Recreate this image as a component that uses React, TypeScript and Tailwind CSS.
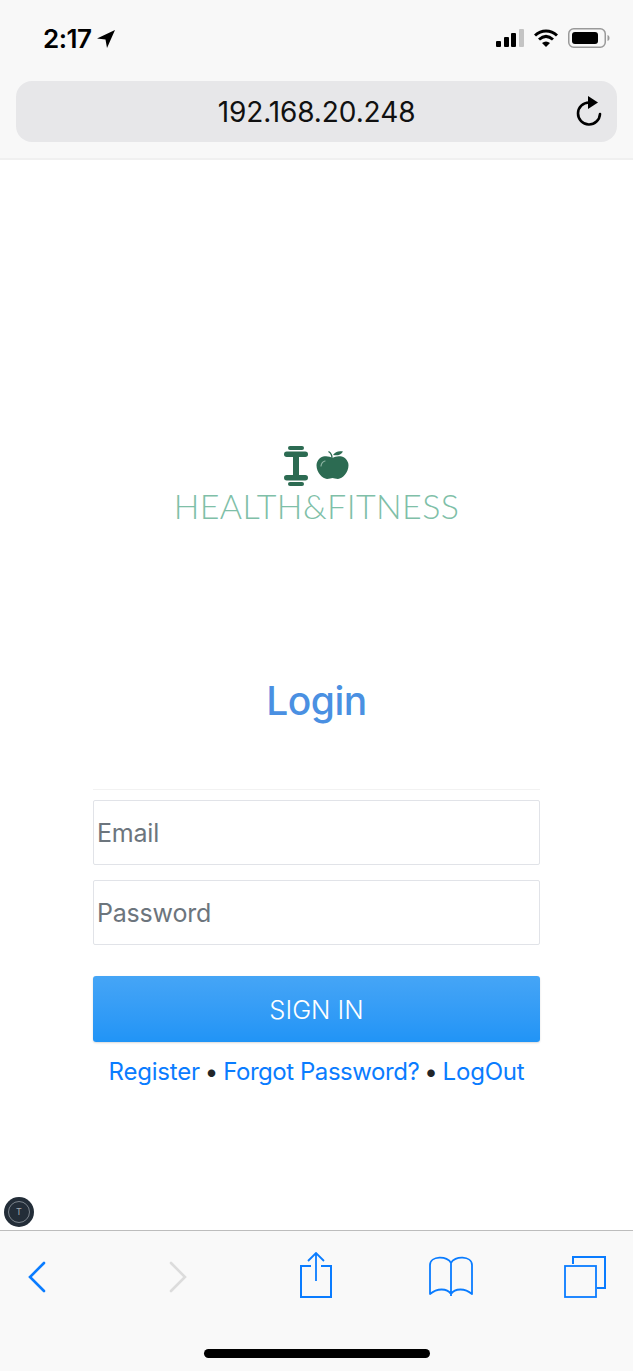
import React from "react";

const sans = "font-['Inter','Liberation_Sans',sans-serif]";

function StatusIcons() {
  return (
    <div className="flex items-center gap-[10px]">
      <svg width="28" height="18" viewBox="0 0 28 18">
        <rect x="0" y="12" width="5" height="6" rx="1" fill="#000" />
        <rect x="8" y="8" width="5" height="10" rx="1" fill="#000" />
        <rect x="15" y="4" width="5" height="14" rx="1" fill="#000" />
        <rect x="23" y="0" width="5" height="18" rx="1" fill="#c4c4c4" />
      </svg>
      <svg width="24" height="18" viewBox="0 0 24 18">
        <path d="M1 6.5C7.5 0.5 16.5 0.5 23 6.5" fill="none" stroke="#000" strokeWidth="3" />
        <path d="M5 10.5C9.5 6.5 14.5 6.5 19 10.5" fill="none" stroke="#000" strokeWidth="3" />
        <path d="M12 18L8 14C10.5 12 13.5 12 16 14Z" fill="#000" />
      </svg>
      <svg width="42" height="20" viewBox="0 0 42 20">
        <rect x="0.75" y="0.75" width="36.5" height="18.5" rx="5" fill="none" stroke="#9a9a9a" strokeWidth="1.5" />
        <rect x="4" y="4" width="26" height="12" rx="3" fill="#000" />
        <path d="M39.5 7C41 7.5 41.5 8.5 41.5 10C41.5 11.5 41 12.5 39.5 13Z" fill="#9a9a9a" />
      </svg>
    </div>
  );
}

function BrowserHeader() {
  return (
    <header className="h-[160px] shrink-0 border-b-2 border-[#f0f0f0] bg-[#f8f8f8] px-4">
      <div className="flex h-[81px] items-start justify-between pl-[27px] pr-[7px] pt-[24px]">
        <div className="flex items-center gap-[6px]">
          <span className={`${sans} text-[26px] leading-[30px] font-semibold tracking-[-0.5px] text-black`}>2:17</span>
          <svg width="18" height="18" viewBox="0 0 18 18">
            <path d="M18 0L0 8.5L8.5 9.5L10 18Z" fill="#000" />
          </svg>
        </div>
        <div className="pt-[4px]">
          <StatusIcons />
        </div>
      </div>
      <div className="relative flex h-[61px] items-center justify-center rounded-2xl bg-[#e7e7e9]">
        <span className={`${sans} text-[28px] font-normal tracking-[-0.1px] text-[#111]`}>192.168.20.248</span>
        <svg className="absolute right-[14px] top-[15px]" width="28" height="31" viewBox="0 0 28 31">
          <path d="M14 6.5A11 11 0 1 0 25 18" fill="none" stroke="#000" strokeWidth="2.6" strokeLinecap="round" />
          <path d="M13 0L23 6.5L13 13Z" fill="#000" />
        </svg>
      </div>
    </header>
  );
}

function Logo() {
  return (
    <div className="flex flex-col items-center">
      <div className="flex items-start gap-[8px]">
        <svg width="24" height="40" viewBox="0 0 24 40">
          <rect x="4" y="0" width="16" height="4" rx="2" fill="#2c6b52" />
          <rect x="0" y="5.5" width="24" height="5.5" rx="2.75" fill="#2c6b52" />
          <rect x="9" y="11" width="6" height="18" fill="#2c6b52" />
          <rect x="0" y="29" width="24" height="5.5" rx="2.75" fill="#2c6b52" />
          <rect x="4" y="36" width="16" height="4" rx="2" fill="#2c6b52" />
        </svg>
        <svg className="mt-[3px]" width="33" height="31" viewBox="0 0 33 31">
          <path d="M16.5 9C12 6 3 6 0.8 14C-1 22 6 30 11 30C13.5 30 15 29 16.5 29C18 29 19.5 30 22 30C27 30 34 22 32.2 14C30 6 21 6 16.5 9Z" fill="#2c6b52" />
          <path d="M16 9C16 6 15 4 12.5 2.5" fill="none" stroke="#2c6b52" strokeWidth="1.4" />
          <path d="M17 6C19 2.5 23 1.5 27 2.5C25 6 21 7 17 6Z" fill="#2c6b52" />
          <path d="M5 17C5.5 14 7 12.5 9 12" fill="none" stroke="#8fb5a4" strokeWidth="1.2" strokeLinecap="round" />
        </svg>
      </div>
      <div className="mt-[2px] font-['Lato',sans-serif] text-[34px] leading-[36px] font-light tracking-[0.4px] whitespace-nowrap text-[#7fbfa8]">
        HEALTH&amp;FITNESS
      </div>
    </div>
  );
}

function LoginForm() {
  const inputClass = `${sans} h-[65px] w-full rounded-[2px] border border-[#e1e3e8] bg-white px-[3px] text-[25px] tracking-[-0.2px] placeholder:text-[#6c757d] outline-none`;
  return (
    <main className="flex-1 px-[93px] pt-[286px]">
      <Logo />
      <h1 className={`${sans} mt-[155px] text-center text-[39px] leading-[44px] font-medium tracking-[-0.5px] text-[#4a90e2]`}>
        Login
      </h1>
      <hr className="mt-[66px] border-t border-[#f2f2f2]" />
      <form className="mt-[10px] flex flex-col gap-[15px]">
        <input className={inputClass} placeholder="Email" />
        <input className={inputClass} placeholder="Password" type="password" />
        <button
          type="button"
          className={`${sans} mt-[16px] h-[66px] rounded-[3px] bg-gradient-to-b from-[#45a5f6] to-[#2094f6] pt-[2px] text-[25.5px] font-light text-white shadow-[0_1px_2px_rgba(0,0,0,0.15)]`}
        >
          SIGN IN
        </button>
      </form>
      <div className={`${sans} mt-[12px] flex justify-center gap-[5px] text-[24px] leading-[36px] tracking-[-0.2px] whitespace-nowrap text-[#212529]`}>
        <a className="text-[#0a7cff]">Register</a>
        <span>•</span>
        <a className="tracking-[-0.45px] text-[#0a7cff]">Forgot Password?</a>
        <span>•</span>
        <a className="text-[#0a7cff]">LogOut</a>
      </div>
    </main>
  );
}

function BrowserToolbar() {
  return (
    <footer className="h-[141px] shrink-0 border-t border-[#bdbdbd] bg-[#f9f9f9]">
      <div className="flex h-[81px] items-center pl-[28px] pt-[10px]">
        <svg width="18" height="32" viewBox="0 0 18 32">
          <path d="M16 2L2 16L16 30" fill="none" stroke="#0a7cff" strokeWidth="2.6" strokeLinecap="round" />
        </svg>
        <svg className="ml-[123px]" width="18" height="32" viewBox="0 0 18 32">
          <path d="M2 2L16 16L2 30" fill="none" stroke="#dcdcdc" strokeWidth="2.6" strokeLinecap="round" />
        </svg>
        <svg className="mb-[4px] ml-[113px]" width="32" height="46" viewBox="0 0 32 46">
          <path d="M11 14H1V45H31V14H21" fill="none" stroke="#0a7cff" strokeWidth="2" />
          <path d="M16 1V29M8 9L16 1L24 9" fill="none" stroke="#0a7cff" strokeWidth="1.8" />
        </svg>
        <svg className="ml-[97px]" width="44" height="42" viewBox="0 0 44 42">
          <path d="M22 38C18 32 8 32 1 38V9C1 -0.5 19 -0.5 22 7C25 -0.5 43 -0.5 43 9V38C36 32 26 32 22 38ZM22 7V40" fill="none" stroke="#0a7cff" strokeWidth="1.8" strokeLinejoin="round" />
        </svg>
        <svg className="ml-[91px]" width="42" height="42" viewBox="0 0 42 42">
          <path d="M9 8V1H41V32H33" fill="none" stroke="#0a7cff" strokeWidth="2" />
          <rect x="1" y="10" width="31" height="31" fill="none" stroke="#0a7cff" strokeWidth="1.8" />
        </svg>
      </div>
      <div className="mx-auto mt-[37px] h-[9px] w-[226px] rounded-full bg-black" />
    </footer>
  );
}

export default function App() {
  return (
    <div className="relative flex h-[1371px] w-[633px] flex-col overflow-hidden bg-white">
      <BrowserHeader />
      <LoginForm />
      <div className="absolute left-[4px] top-[1197px] flex h-[30px] w-[30px] items-center justify-center rounded-full bg-[#232d38]">
        <div className={`${sans} flex h-[22px] w-[22px] items-center justify-center rounded-full border border-[#7b838b] text-[9px] text-[#a5abb1]`}>
          T
        </div>
      </div>
      <BrowserToolbar />
    </div>
  );
}
